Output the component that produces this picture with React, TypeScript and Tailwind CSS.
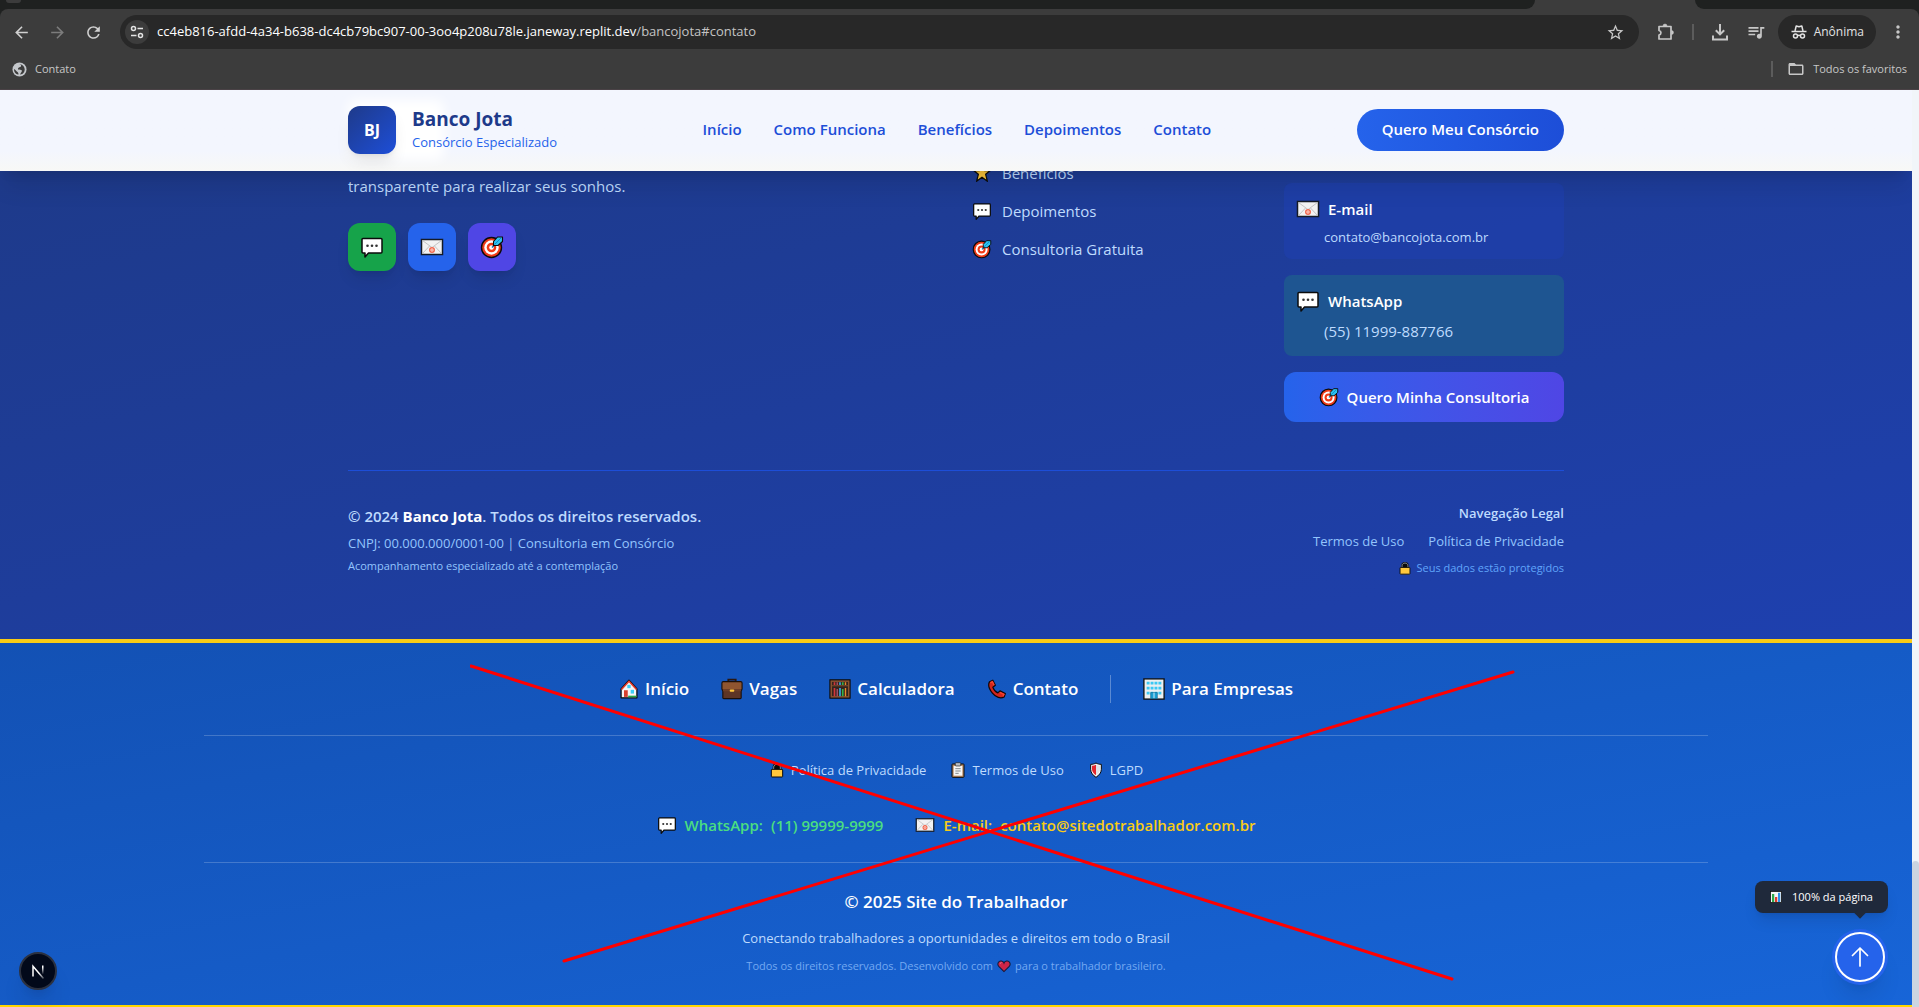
import type { ReactNode } from 'react'
import { MdArrowBack, MdArrowForward, MdRefresh, MdStarBorder, MdQueueMusic, MdMoreVert, MdFolderOpen } from 'react-icons/md'

type IconProps = { className?: string }

function Bubble({ className }: IconProps) {
  return (
    <svg viewBox="0 0 24 24" className={className} aria-hidden="true">
      <path d="M3 3.500h18a1 1 0 0 1 1 1V17a1 1 0 0 1-1 1H8.500L5 22v-4H3a1 1 0 0 1-1-1V4.500a1 1 0 0 1 1-1z" fill="#fff" stroke="#0b0b0b" strokeWidth="1.500" strokeLinejoin="round" />
      <circle cx="7.500" cy="10.800" r="1.300" fill="#333" />
      <circle cx="12" cy="10.800" r="1.300" fill="#333" />
      <circle cx="16.500" cy="10.800" r="1.300" fill="#333" />
    </svg>
  )
}

function Mail({ className }: IconProps) {
  return (
    <svg viewBox="0 0 24 24" className={className} aria-hidden="true">
      <rect x="1.500" y="4.500" width="21" height="15" fill="#f2f2f2" stroke="#151b26" strokeWidth="1.500" />
      <path d="M2.500 5.500l9.500 7 9.500-7M2.500 18.500l7-7.500M21.500 18.500l-7-7.500" fill="none" stroke="#c4c4c4" strokeWidth="1" />
      <circle cx="12" cy="15" r="3" fill="#f2694f" />
      <circle cx="12" cy="15" r="1.200" fill="none" stroke="#fff" strokeWidth="0.700" />
    </svg>
  )
}

function Target({ className }: IconProps) {
  return (
    <svg viewBox="0 0 24 24" className={className} aria-hidden="true">
      <circle cx="11.500" cy="12.500" r="10" fill="#f03a17" stroke="#0b0b0b" strokeWidth="1.400" />
      <circle cx="11.500" cy="12.500" r="7.200" fill="#fff" />
      <circle cx="11.500" cy="12.500" r="4.800" fill="#f03a17" />
      <circle cx="11.500" cy="12.500" r="2.300" fill="#fff" />
      <path d="M12 12.500l3-3" stroke="#0b6fa8" strokeWidth="1.400" />
      <path d="M13.500 10.500V6.500L17.500 2h5v4.500L18 10.500z" fill="#2cc3f2" stroke="#0b0b0b" strokeWidth="1.100" strokeLinejoin="round" />
      <path d="M14.500 9.500L21 3" stroke="#0b7bb8" strokeWidth="0.800" />
    </svg>
  )
}

function Star({ className }: IconProps) {
  return (
    <svg viewBox="0 0 24 24" className={className} aria-hidden="true">
      <path d="M12 2l3 7h7l-5.600 4.600L18.500 22 12 17l-6.500 5 2.100-8.400L2 9h7z" fill="#ffc83d" stroke="#0b0b0b" strokeWidth="1.500" strokeLinejoin="round" />
    </svg>
  )
}

function Lock({ className }: IconProps) {
  return (
    <svg viewBox="0 0 24 24" className={className} aria-hidden="true">
      <path d="M5.500 12V7.500C5.500 4 8 1.500 12 1.500s6.500 2.500 6.500 6V12z" fill="#0b0b0b" />
      <path d="M7 11V8c0-2.500 2-4.500 5-4.500S17 5.500 17 8v3" fill="none" stroke="#a9b0b8" strokeWidth="1.300" />
      <rect x="3.500" y="11" width="17" height="11.500" rx="1" fill="#ffc83d" stroke="#0b0b0b" strokeWidth="1.500" />
    </svg>
  )
}

function House({ className }: IconProps) {
  return (
    <svg viewBox="0 0 24 24" className={className} aria-hidden="true">
      <path d="M2.500 12L12 1.500 21.500 12v10.500h-19z" fill="#f6f6f6" stroke="#0b0b0b" strokeWidth="1.500" strokeLinejoin="round" />
      <path d="M3 12.500L12 2.700l9 9.800" fill="none" stroke="#e8392b" strokeWidth="1.800" />
      <rect x="10" y="7" width="4" height="4" fill="#3ccff5" />
      <rect x="14" y="13" width="4" height="4.500" fill="#3ccff5" />
      <rect x="6" y="13.500" width="4.500" height="8" fill="#d8402e" />
      <path d="M11 20h10v2H11z" fill="#28a745" />
    </svg>
  )
}

function Briefcase({ className }: IconProps) {
  return (
    <svg viewBox="0 0 24 24" className={className} aria-hidden="true">
      <path d="M8 5V1.800h8V5" fill="none" stroke="#2a1710" strokeWidth="2" />
      <rect x="1" y="4" width="22" height="9.500" rx="1.500" fill="#8f5530" stroke="#1b0f0a" strokeWidth="1.200" />
      <path d="M2 13.500h20v8a1 1 0 0 1-1 1H3a1 1 0 0 1-1-1z" fill="#5e3526" stroke="#1b0f0a" strokeWidth="1.200" />
      <rect x="2.200" y="12" width="19.600" height="2.500" fill="#6d3d28" />
      <rect x="9.500" y="12.500" width="5" height="2.400" rx="1" fill="#ffc83d" />
    </svg>
  )
}

function Abacus({ className }: IconProps) {
  return (
    <svg viewBox="0 0 24 24" className={className} aria-hidden="true">
      <rect x="1" y="2" width="22" height="20" fill="#33231d" stroke="#0b0b0b" strokeWidth="1.200" />
      <rect x="2.500" y="3.500" width="19" height="17" fill="none" stroke="#8a5230" strokeWidth="1.600" />
      <path d="M3 8.500h18" stroke="#8a5230" strokeWidth="1" />
      <path d="M6 4.500v3M6 11v9" stroke="#d3373a" strokeWidth="1.800" />
      <path d="M9 4.500v3M9 12v8" stroke="#a8506b" strokeWidth="1.500" />
      <path d="M12 4.500v3M12 11v9" stroke="#37a8e0" strokeWidth="1.800" />
      <path d="M15 4.500v3M15 12v8" stroke="#35b24a" strokeWidth="1.800" />
      <path d="M18 4.500v3M18 11v9" stroke="#e98a2b" strokeWidth="1.500" />
    </svg>
  )
}

function Handset({ className }: IconProps) {
  return (
    <svg viewBox="0 0 24 24" className={className} aria-hidden="true">
      <path d="M3 3.500L7 1.500l3 6-3 2.300c1 3.300 3 5.700 6 6.900l2.600-2.500 6.400 3.300-1.500 4c-4 2.500-10 .5-14-4.500S1 7 3 3.500z" fill="#d4251c" stroke="#140606" strokeWidth="1.500" strokeLinejoin="round" />
      <path d="M4 4.500l2.500-1.200 2 4M15.500 16l4.800 2.400-1 2.300" fill="none" stroke="#f4432f" strokeWidth="1.800" />
    </svg>
  )
}

function Building({ className }: IconProps) {
  return (
    <svg viewBox="0 0 24 24" className={className} aria-hidden="true">
      <rect x="1" y="1" width="22" height="22" fill="#eceff1" stroke="#0b0b0b" strokeWidth="1.400" />
      <path d="M4 5.500h16M4 11h16M4 16.500h16" stroke="#3cc8f4" strokeWidth="3" strokeDasharray="3.200 1.070" />
      <rect x="8.500" y="16" width="7" height="6.300" fill="#1a9fd4" stroke="#0a6c96" strokeWidth="0.800" />
      <path d="M12 16v6" stroke="#dff5fd" strokeWidth="1" />
    </svg>
  )
}

function Clipboard({ className }: IconProps) {
  return (
    <svg viewBox="0 0 24 24" className={className} aria-hidden="true">
      <rect x="3" y="3" width="18" height="20" rx="1" fill="#b98a63" stroke="#0b0b0b" strokeWidth="1.500" />
      <rect x="5.500" y="6" width="13" height="14.500" fill="#f6f6f6" />
      <rect x="8" y="1" width="8" height="5" rx="1" fill="#b9bec4" stroke="#222" strokeWidth="1" />
      <path d="M8 10h8M8 13.500h8M8 17h5" stroke="#70757a" strokeWidth="1.300" />
    </svg>
  )
}

function Shield({ className }: IconProps) {
  return (
    <svg viewBox="0 0 24 24" className={className} aria-hidden="true">
      <path d="M12 1.500c2.500 1.500 5 2 8 2V11c0 5-3.500 9-8 12-4.500-3-8-7-8-12V3.500c3 0 5.500-.5 8-2z" fill="#f6f6f6" stroke="#0b0b0b" strokeWidth="1.500" strokeLinejoin="round" />
      <path d="M12 4v16c-3.500-2.500-6-5.500-6-9V5.500c2.200 0 4.200-.5 6-1.500z" fill="#e3272d" />
      <path d="M12 4v16c3.500-2.500 6-5.500 6-9V5.500c-2.200 0-4.200-.5-6-1.500z" fill="#dfe2e6" />
    </svg>
  )
}

function Heart({ className }: IconProps) {
  return (
    <svg viewBox="0 0 24 24" className={className} aria-hidden="true">
      <path d="M12 21.500L3 12.500C-.5 8.500 3 2.500 7.500 3.500 10 4 11.500 5.500 12 7c.5-1.500 2-3 4.500-3.500C21 2.500 24.500 8.500 21 12.500z" fill="#cf2547" stroke="#151b3a" strokeWidth="1.800" />
      <path d="M5.500 8c.3-1.200 1-1.800 2.200-2" fill="none" stroke="#f08aa0" strokeWidth="1.600" />
    </svg>
  )
}

function BarChart({ className }: IconProps) {
  return (
    <svg viewBox="0 0 24 24" className={className} aria-hidden="true">
      <rect x="1" y="1" width="22" height="22" fill="#f4f4f4" stroke="#0b0b0b" strokeWidth="1.500" />
      <rect x="4" y="6" width="4.500" height="16" fill="#2fa84a" />
      <rect x="10" y="12" width="4.500" height="10" fill="#e2382c" />
      <rect x="16" y="3.500" width="4.500" height="18.500" fill="#2d8fe8" />
    </svg>
  )
}

function Globe({ className }: IconProps) {
  return (
    <svg viewBox="0 0 16 16" className={className} aria-hidden="true">
      <circle cx="8" cy="8" r="7.500" fill="#c4c7cb" />
      <path d="M7.500 2.500c2 .2 2.800 1 2 2.200-.8 1-2.500.8-3 2s.8 1.500 2.300 1.500 2.200 1 1.500 2.300-1.300 1.500-1.500 3c3-.5 5-3 4.700-6-.3-2.800-2.700-5-6-5zM2.200 7.500c-.3 3 1.800 5.500 4.500 6 .5-1.500-.2-2.300-1.200-3S4 8.300 2.200 7.500z" fill="#3c3c3c" />
    </svg>
  )
}

function BrowserChrome() {
  return (
    <div className="border-b border-[#4a4246] bg-[#1f2120] text-[#c7c7c7]">
      <div className="flex h-[9px] bg-[#3c3c3c]">
        <div className="w-4/5 rounded-br-xl bg-[#1f2120]">
          <div className="ml-1.5 h-[3px] w-[15px] rounded-b-lg bg-[#3c3c3c]" />
        </div>
        <div className="w-1/12" />
        <div className="flex-1 rounded-bl-xl bg-[#1f2120]" />
      </div>
      <div className="rounded-t-lg bg-[#3c3c3c]">
        <div className="flex h-[46px] items-center">
          <div className="flex items-center gap-[17px] pl-3">
            <button aria-label="Voltar" className="text-[#d0d0d0]"><MdArrowBack size={19} /></button>
            <button aria-label="Avançar" className="text-[#7c7c7c]"><MdArrowForward size={19} /></button>
            <button aria-label="Recarregar" className="text-[#d0d0d0]"><MdRefresh size={19} /></button>
          </div>
          <div className="ml-[17px] flex h-[34px] flex-1 items-center rounded-full bg-[#282828] pl-[5px] pr-3.5">
            <button aria-label="Informações do site" className="flex size-6 items-center justify-center rounded-full bg-[#3c3c3c]">
              <svg viewBox="0 0 16 16" className="size-4" fill="none" stroke="#e3e3e3" strokeWidth="1.500" aria-hidden="true">
                <circle cx="4.500" cy="4.500" r="2" />
                <path d="M8.500 4.500H14M2 11.500h5.500" />
                <circle cx="11.500" cy="11.500" r="2" />
              </svg>
            </button>
            <span className="ml-2 flex-1 whitespace-nowrap text-[13px] text-[#c4c4c4]">
              <span className="text-white">cc4eb816-afdd-4a34-b638-dc4cb79bc907-00-3oo4p208u78le.janeway.replit.dev</span>/bancojota#contato
            </span>
            <button aria-label="Adicionar aos favoritos"><MdStarBorder size={19} /></button>
          </div>
          <div className="flex items-center pl-[18px] pr-[11px]">
            <button aria-label="Extensões">
              <svg viewBox="0 0 18 18" className="size-[18px]" fill="none" stroke="currentColor" strokeWidth="1.700" strokeLinejoin="round" aria-hidden="true">
                <path d="M2 3.500h12v12.500H2v-4c2.600-.6 2.600-3.900 0-4.500z" />
                <path d="M6 3a2 2 0 0 1 4 0zM14.500 7.500a2 2 0 0 1 0 4z" fill="currentColor" strokeWidth="0.500" />
              </svg>
            </button>
            <span className="ml-[17px] h-4 w-0.5 bg-[#5c5c5c]" />
            <button aria-label="Downloads" className="ml-[17px]">
              <svg viewBox="0 0 18 18" className="size-[18px]" fill="none" stroke="currentColor" strokeWidth="2" aria-hidden="true">
                <path d="M9 1v10M4.800 7.200L9 11.400l4.200-4.200M2 12.500V16.500h14v-4" />
              </svg>
            </button>
            <button aria-label="Controle de mídia" className="ml-[17px]"><MdQueueMusic size={20} /></button>
            <button className="ml-3 flex h-[34px] items-center rounded-full bg-[#282828] px-3 text-[#e3e3e3]">
              <svg viewBox="0 0 18 18" className="size-[18px]" fill="none" stroke="currentColor" strokeWidth="1.500" aria-hidden="true">
                <path d="M5 8l1.200-5L9 3.700 11.800 3 13 8" strokeLinejoin="round" />
                <path d="M1.500 8.500h15" />
                <circle cx="5.500" cy="13" r="2" />
                <circle cx="12.500" cy="13" r="2" />
                <path d="M7.500 12.700q1.500-.8 3 0" />
              </svg>
              <span className="ml-1.5 text-[12px] font-medium">Anônima</span>
            </button>
            <button aria-label="Mais" className="ml-3"><MdMoreVert size={20} /></button>
          </div>
        </div>
        <div className="flex h-[34px] items-center justify-between px-3 pb-1.5 text-[11px]">
          <a href="#contato" className="flex items-center gap-2"><Globe className="size-[15px]" />Contato</a>
          <div className="flex items-center">
            <span className="h-4 w-0.5 bg-[#5c5c5c]" />
            <button className="ml-3.5 flex items-center gap-2"><MdFolderOpen size={18} />Todos os favoritos</button>
          </div>
        </div>
      </div>
    </div>
  )
}

const sections = ['Início', 'Como Funciona', 'Benefícios', 'Depoimentos', 'Contato']

function Header() {
  return (
    <header className="relative z-10 bg-linear-to-b from-[#f3f6fe] from-75% to-[#f8f8f6] shadow-xl">
      <div className="mx-auto flex h-[81px] max-w-7xl items-center justify-between px-8 pb-0.5">
        <a href="#inicio" className="relative flex items-center gap-4">
          <span className="absolute -inset-y-1.5 left-0 w-24 rounded-lg bg-white blur-[6px]" />
          <span className="relative flex size-12 items-center justify-center rounded-xl bg-linear-to-br from-[#1e3a8a] to-[#1d4ed8] text-base font-bold text-white shadow-lg">BJ</span>
          <span className="relative flex flex-col">
            <span className="text-[19px] font-bold leading-6 text-[#1e3a8a]">Banco Jota</span>
            <span className="text-[13px] leading-[22px] text-[#2563eb]">Consórcio Especializado</span>
          </span>
        </a>
        <nav className="flex gap-8 text-[15px] font-semibold text-[#1d4ed8]">
          {sections.map((s) => <a key={s} href={'#' + s}>{s}</a>)}
        </nav>
        <button className="h-[42px] rounded-full bg-linear-to-r from-[#2563eb] to-[#1d4ed8] px-[25px] text-[15px] font-semibold text-white">Quero Meu Consórcio</button>
      </div>
    </header>
  )
}

function IconLink({ icon, children }: { icon: ReactNode; children: ReactNode }) {
  return <a href="#secao" className="flex items-center gap-2.5">{icon}{children}</a>
}

function BankFooter() {
  return (
    <footer className="-mt-2.5 bg-linear-to-br from-[#1e3a8a] to-[#1e40af] text-[#bfdbfe]">
      <div className="mx-auto max-w-7xl px-8 pb-[62px]">
        <div className="grid grid-cols-4 gap-8">
          <div className="col-span-2 pt-[13px]">
            <p className="text-[15px] leading-6">transparente para realizar seus sonhos.</p>
            <div className="mt-[25px] flex gap-3">
              <a href="#whatsapp" aria-label="WhatsApp" className="flex size-12 items-center justify-center rounded-xl bg-[#16a34a] shadow-lg"><Bubble className="size-6" /></a>
              <a href="#email" aria-label="E-mail" className="flex size-12 items-center justify-center rounded-xl bg-[#2563eb] shadow-lg"><Mail className="size-6" /></a>
              <a href="#consultoria" aria-label="Consultoria" className="flex size-12 items-center justify-center rounded-xl bg-[#4f46e5] shadow-lg"><Target className="size-6" /></a>
            </div>
          </div>
          <ul className="flex flex-col gap-3.5 text-[15px] leading-6">
            <li><IconLink icon={<Star className="size-5" />}>Benefícios</IconLink></li>
            <li><IconLink icon={<Bubble className="size-5" />}>Depoimentos</IconLink></li>
            <li><IconLink icon={<Target className="size-5" />}>Consultoria Gratuita</IconLink></li>
          </ul>
          <div className="flex flex-col gap-4 pt-[22px]">
            <div className="rounded-lg bg-[#1e40af]/60 p-3">
              <p className="flex items-center gap-2 text-[15px] font-semibold leading-7 text-white"><Mail className="size-6" />E-mail</p>
              <p className="mt-1 pl-7 text-[13px] leading-5">contato@bancojota.com.br</p>
            </div>
            <div className="rounded-lg bg-[#1e5591] p-3">
              <p className="flex items-center gap-2 text-[15px] font-semibold leading-7 text-white"><Bubble className="size-6" />WhatsApp</p>
              <p className="mt-1 pl-7 text-[15px] leading-[25px]">(55) 11999-887766</p>
            </div>
            <button className="flex items-center justify-center gap-2 rounded-xl bg-linear-to-r from-[#2563eb] to-[#4f46e5] p-3 text-[15px] font-semibold leading-[26px] text-white"><Target className="size-5" />Quero Minha Consultoria</button>
          </div>
        </div>
        <div className="mt-12 flex justify-between border-t border-[#1d4ed8] pt-8">
          <div>
            <p className="text-[15px] font-semibold leading-[26px]">© 2024 <strong className="font-bold text-white">Banco Jota</strong>. Todos os direitos reservados.</p>
            <p className="mt-1 text-[13px] leading-5 text-[#93c5fd]">CNPJ: 00.000.000/0001-00 | Consultoria em Consórcio</p>
            <p className="mt-1 text-[11px] leading-[18px] text-[#93c5fd]">Acompanhamento especializado até a contemplação</p>
          </div>
          <div className="flex flex-col items-end">
            <p className="text-[13px] font-semibold leading-5">Navegação Legal</p>
            <div className="mt-2 flex gap-6 text-[13px] leading-5 text-[#93c5fd]">
              <a href="#termos">Termos de Uso</a>
              <a href="#privacidade">Política de Privacidade</a>
            </div>
            <p className="mt-2 flex items-center gap-1 text-[11px] leading-[18px] text-[#60a5fa]"><Lock className="size-3.5" />Seus dados estão protegidos</p>
          </div>
        </div>
      </div>
    </footer>
  )
}

function NavItem({ icon, children }: { icon: ReactNode; children: ReactNode }) {
  return <a href="#pagina" className="flex items-center gap-1.5">{icon}{children}</a>
}

function WorkerFooter() {
  return (
    <footer className="relative border-b-2 border-t-4 border-b-[#ffd700] border-t-[#facc15] bg-linear-to-br from-[#1351b4] to-[#1765d8] text-white">
      <div className="mx-auto flex max-w-[1536px] flex-col items-center px-4 pb-[31px]">
        <nav className="flex w-full justify-center gap-8 border-b border-white/20 py-8 text-[17px] font-semibold leading-7">
          <NavItem icon={<House className="size-5" />}>Início</NavItem>
          <NavItem icon={<Briefcase className="size-[22px]" />}>Vagas</NavItem>
          <NavItem icon={<Abacus className="size-[22px]" />}>Calculadora</NavItem>
          <NavItem icon={<Handset className="size-5" />}>Contato</NavItem>
          <span className="w-px bg-white/30" />
          <NavItem icon={<Building className="size-[22px]" />}>Para Empresas</NavItem>
        </nav>
        <div className="flex justify-center gap-6 pt-6 text-[13px] leading-5 text-[#bfdbfe]">
          <NavItem icon={<Lock className="size-4" />}>Política de Privacidade</NavItem>
          <NavItem icon={<Clipboard className="size-4" />}>Termos de Uso</NavItem>
          <NavItem icon={<Shield className="size-4" />}>LGPD</NavItem>
        </div>
        <div className="mt-8 flex w-full justify-center gap-8 border-b border-white/20 pb-6 text-[15px] font-semibold leading-[26px]">
          <a href="#whatsapp" className="flex items-center gap-2 text-[#4ade80]"><Bubble className="size-5" /><span>WhatsApp:</span><span>(11) 99999-9999</span></a>
          <a href="#email" className="flex items-center gap-2 text-[#facc15]"><Mail className="size-5" /><span>E-mail:</span><span>contato@sitedotrabalhador.com.br</span></a>
        </div>
        <p className="mt-[25px] text-[17px] font-semibold leading-7">© 2025 Site do Trabalhador</p>
        <p className="mt-3 text-[13px] leading-5 text-[#bfdbfe]">Conectando trabalhadores a oportunidades e direitos em todo o Brasil</p>
        <p className="mt-2.5 flex items-center gap-1 text-[11px] leading-4 text-[#73a9f2]">Todos os direitos reservados. Desenvolvido com <Heart className="size-3.5" /> para o trabalhador brasileiro.</p>
      </div>

      <svg className="pointer-events-none absolute left-1/2 top-5 -ml-[486px] h-[320px] w-[1052px]" viewBox="0 0 1052 320" fill="none" stroke="#ff0000" strokeWidth="3" strokeLinecap="round" aria-hidden="true">
        <path d="M1 3L982 316" />
        <path d="M94 298L1043 9" />
      </svg>

      <button aria-label="Ferramentas de desenvolvimento" className="absolute bottom-[15px] left-[19px] flex size-[38px] items-center justify-center rounded-full border-2 border-[#2b3140] bg-[#02091a] shadow-xl">
        <svg viewBox="0 0 16 16" className="size-4" fill="none" aria-hidden="true">
          <defs>
            <linearGradient id="stem" x1="0" y1="0" x2="0" y2="1"><stop offset="0.200" stopColor="#fff" /><stop offset="1" stopColor="#fff" stopOpacity="0" /></linearGradient>
            <linearGradient id="slash" gradientUnits="userSpaceOnUse" x1="9" y1="10" x2="14" y2="16"><stop offset="0" stopColor="#fff" /><stop offset="1" stopColor="#fff" stopOpacity="0.200" /></linearGradient>
          </defs>
          <path d="M3 13.500V3.200L13.500 15.500" stroke="url(#slash)" strokeWidth="1.500" />
          <rect x="12" y="2.500" width="1.500" height="9" fill="url(#stem)" />
        </svg>
      </button>

      <div className="absolute bottom-[23px] right-6 flex flex-col items-end">
        <div className="relative flex h-8 items-center gap-2.5 rounded-lg bg-[#1f293b] px-[15px] text-[11px] font-medium text-white shadow-lg">
          <BarChart className="size-3" />
          100% da página
          <span className="absolute -bottom-1 right-6 size-2 rotate-45 bg-[#1f293b]" />
        </div>
        <button aria-label="Voltar ao topo" className="mr-[3px] mt-[19px] flex size-[50px] items-center justify-center rounded-full border-2 border-white bg-[#2563eb] shadow-xl ring-3 ring-[#2563eb]">
          <svg viewBox="0 0 20 20" className="size-5" fill="none" stroke="#fff" strokeWidth="1.700" strokeLinecap="round" strokeLinejoin="round" aria-hidden="true">
            <path d="M10 19V1M2.500 8.500L10 1l7.500 7.500" />
          </svg>
        </button>
      </div>
    </footer>
  )
}

export default function App() {
  return (
    <div className="flex min-h-screen flex-col font-['Open_Sans',sans-serif]">
      <BrowserChrome />
      <div className="flex flex-1">
        <main className="min-w-0 flex-1 overflow-hidden bg-[#1351b4]">
          <Header />
          <BankFooter />
          <WorkerFooter />
        </main>
        <div className="flex w-[7px] flex-col justify-end bg-[#f1f5f9]">
          <div className="h-[146px] rounded-t-full bg-[#cbd5e1]" />
        </div>
      </div>
    </div>
  )
}
